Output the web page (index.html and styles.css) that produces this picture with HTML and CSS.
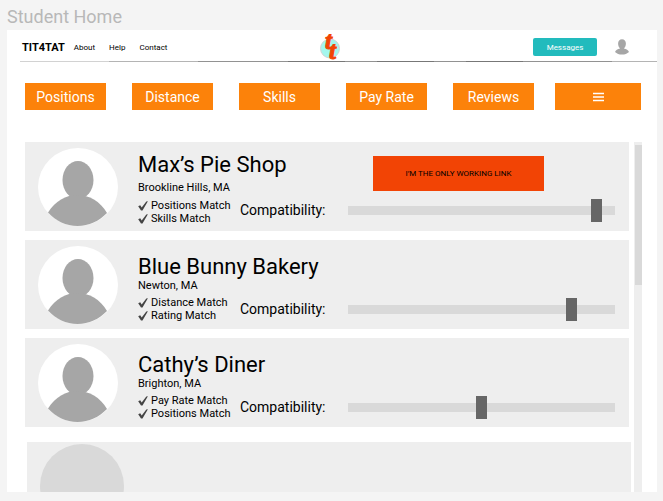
FILE: index.html
```html
<!DOCTYPE html>
<html lang="en">
<head>
<meta charset="utf-8">
<meta name="viewport" content="width=device-width, initial-scale=1">
<title>Student Home</title>
<link rel="stylesheet" href="styles.css">
</head>
<body>
<svg class="symbols" aria-hidden="true">
  <symbol id="person" viewBox="0 0 80 78">
    <ellipse cx="40" cy="39" rx="40" ry="39" fill="#fff"/>
    <ellipse cx="40" cy="32" rx="15.500" ry="19" fill="#a6a6a6"/>
    <path d="M10 64.500C17 53 28 47 39.500 47S62 53 69 65C61 73 51 78 39.500 78S18 73 10 64.500Z" fill="#a6a6a6"/>
  </symbol>
  <symbol id="check" viewBox="0 0 10 10">
    <path d="M0.200 5.300L2.200 4.300L3.700 6.600L8.300 0.500L9.900 0.300L4.500 9.500H3Z" fill="#444"/>
  </symbol>
</svg>
<h1 class="page-title">Student Home</h1>
<div class="frame">
  <header class="header">
    <div class="header-left">
      <a class="brand" href="#">TIT4TAT</a>
      <nav class="nav">
        <a href="#">About</a>
        <a href="#">Help</a>
        <a href="#">Contact</a>
      </nav>
    </div>
    <svg class="logo" viewBox="0 0 20 28" role="img" aria-label="TIT4TAT logo">
      <circle cx="10" cy="15.500" r="9.500" fill="#a3f7ee" stroke="#d4d4d4"/>
      <text class="logo-letter" x="5" y="16">t<tspan x="9" y="26">t</tspan></text>
    </svg>
    <div class="header-right">
      <button class="messages" type="button">Messages</button>
      <a class="account" href="#" aria-label="Account">
        <svg viewBox="0 0 14 16" aria-hidden="true">
          <path d="M7 0.300C9.300 0.300 10.900 2.100 10.900 4.600C10.900 6.800 10.100 8.600 8.900 9.600C11.500 10 13.300 11.200 14 13C12.200 14.700 9.900 15.600 7 15.600S1.800 14.700 0 13C0.700 11.200 2.500 10 5.100 9.600C3.900 8.600 3.100 6.800 3.100 4.600C3.100 2.100 4.700 0.300 7 0.300Z" fill="#a6a6a6"/>
        </svg>
      </a>
    </div>
  </header>
  <div class="rule"></div>
  <div class="filters">
    <div class="filter-group">
      <button class="filter" type="button">Positions</button>
      <button class="filter" type="button">Distance</button>
      <button class="filter" type="button">Skills</button>
      <button class="filter" type="button">Pay Rate</button>
      <button class="filter" type="button">Reviews</button>
    </div>
    <button class="filter menu" type="button" aria-label="Menu">
      <svg viewBox="0 0 12 10" aria-hidden="true">
        <path d="M1 1.500H12M1 5H12M1 8.500H12" stroke="#fff" stroke-width="1.600"/>
      </svg>
    </button>
  </div>
  <main class="results">
    <div class="list">
      <article class="card featured">
        <svg class="avatar" aria-hidden="true"><use href="#person"/></svg>
        <div class="body">
          <div class="heading">
            <h2 class="name">Max’s Pie Shop</h2>
            <p class="place">Brookline Hills, MA</p>
          </div>
          <a class="cta" href="#">I’M THE ONLY WORKING LINK</a>
          <ul class="matches">
            <li><svg class="check" aria-hidden="true"><use href="#check"/></svg>Positions Match</li>
            <li><svg class="check" aria-hidden="true"><use href="#check"/></svg>Skills Match</li>
          </ul>
          <label class="label" for="fit-1">Compatibility:</label>
          <input class="range" id="fit-1" type="range" min="0" max="100" value="95">
        </div>
      </article>
      <article class="card">
        <svg class="avatar" aria-hidden="true"><use href="#person"/></svg>
        <div class="body">
          <div class="heading">
            <h2 class="name">Blue Bunny Bakery</h2>
            <p class="place">Newton, MA</p>
          </div>
          <ul class="matches">
            <li><svg class="check" aria-hidden="true"><use href="#check"/></svg>Distance Match</li>
            <li><svg class="check" aria-hidden="true"><use href="#check"/></svg>Rating Match</li>
          </ul>
          <label class="label" for="fit-2">Compatibility:</label>
          <input class="range" id="fit-2" type="range" min="0" max="100" value="85">
        </div>
      </article>
      <article class="card">
        <svg class="avatar" aria-hidden="true"><use href="#person"/></svg>
        <div class="body">
          <div class="heading">
            <h2 class="name">Cathy’s Diner</h2>
            <p class="place">Brighton, MA</p>
          </div>
          <ul class="matches">
            <li><svg class="check" aria-hidden="true"><use href="#check"/></svg>Pay Rate Match</li>
            <li><svg class="check" aria-hidden="true"><use href="#check"/></svg>Positions Match</li>
          </ul>
          <label class="label" for="fit-3">Compatibility:</label>
          <input class="range" id="fit-3" type="range" min="0" max="100" value="50">
        </div>
      </article>
      <div class="placeholder"><div class="placeholder-avatar"></div></div>
    </div>
    <div class="scrollbar"><div class="scroll-thumb"></div></div>
  </main>
</div>
</body>
</html>
```
FILE: styles.css
```css
* {
  box-sizing: border-box;
}

body {
  margin: 0;
  padding: 4px 6px 9px 7px;
  background: #f4f4f4;
  color: #000;
  font-family: Roboto, "Liberation Sans", sans-serif;
}

h1, h2, p, ul {
  margin: 0;
  padding: 0;
  font-weight: 400;
}

a {
  color: inherit;
  text-decoration: none;
}

button {
  border: 0;
  padding: 0;
  color: #fff;
  font-family: inherit;
}

.symbols {
  display: block;
  width: 0;
  height: 0;
}

.page-title {
  color: #b8b8b8;
  font-size: 18px;
  line-height: 26px;
}

.frame {
  background: #fff;
}

/* Header */
.header {
  display: grid;
  grid-template-columns: 1fr auto 1fr;
  align-items: center;
  height: 31px;
  padding: 3px 19px 0 15px;
}

.header-left,
.header-right,
.nav {
  display: flex;
  align-items: center;
}

.header-left {
  gap: 9px;
}

.brand {
  font-size: 11px;
  font-weight: 700;
}

.nav {
  gap: 14px;
  font-size: 8px;
}

.logo {
  width: 20px;
  height: 28px;
  overflow: visible;
}

.logo-letter {
  fill: #f24405;
  stroke: #f24405;
  font-family: "Liberation Serif", serif;
  font-size: 25px;
  font-style: italic;
  font-weight: 700;
}

.header-right {
  justify-content: flex-end;
  gap: 18px;
  padding-right: 9px;
}

.messages {
  width: 64px;
  height: 18px;
  border-radius: 2px;
  background: #22bbbd;
  font-size: 8px;
}

.account svg {
  display: block;
  width: 14px;
  height: 16px;
}

.rule {
  height: 1px;
  margin-left: 13px;
  background: linear-gradient(90deg, #d2d2d2 14%, #b4b4b4 14% 28%, #929292 28% 42%, #777 42% 51%, #929292 51% 56%, #777 56% 65%, #929292 65% 70%, #777 70% 79%, #929292 79% 93%, #b4b4b4 93%);
}

/* Filters */
.filters {
  display: flex;
  gap: 21px;
  padding: 21px 16px 32px 18px;
}

.filter-group {
  display: flex;
  flex: 1;
  gap: 26px;
}

.filter {
  flex: 1;
  height: 27px;
  background: #fc820a;
  font-size: 14px;
}

.menu {
  display: flex;
  flex: 0 0 86px;
  align-items: center;
  justify-content: center;
}

.menu svg {
  width: 12px;
  height: 10px;
}

/* Results */
.results {
  display: flex;
  gap: 3px;
  padding: 0 15px 0 18px;
}

.list {
  display: flex;
  flex: 1;
  flex-direction: column;
  gap: 9px;
}

.card {
  display: flex;
  gap: 20px;
  height: 89px;
  margin-right: 2px;
  padding: 6px 14px 4px 13px;
  background: #eee;
}

.avatar {
  flex: none;
  width: 80px;
  height: 78px;
}

.body {
  display: grid;
  flex: 1;
  grid-template-columns: 102px 108px 1fr;
  grid-template-rows: 47px 32px;
  align-items: center;
}

.featured .body {
  grid-template-rows: 51px 22px;
}

.heading {
  grid-column: 1 / 3;
  align-self: end;
}

.featured .heading {
  padding-bottom: 4px;
}

.name {
  font-size: 22px;
  line-height: 24px;
}

.place {
  font-size: 11px;
  line-height: 14px;
}

.featured .place {
  padding-top: 4px;
}

.cta {
  display: flex;
  align-items: center;
  justify-content: center;
  width: 171px;
  height: 35px;
  margin-left: 25px;
  background: #f24405;
  font-size: 8px;
}

.matches {
  grid-column: 1;
  list-style: none;
  font-size: 11px;
  line-height: 13px;
}

.featured .matches {
  align-self: start;
}

.matches li {
  display: flex;
  align-items: center;
  gap: 3px;
  white-space: nowrap;
}

.check {
  width: 10px;
  height: 10px;
}

.label {
  font-size: 14px;
}

.range {
  width: 100%;
  height: 23px;
  margin: 0;
  background: transparent;
  appearance: none;
}

.range::-webkit-slider-runnable-track {
  height: 9px;
  background: #d9d9d9;
}

.range::-webkit-slider-thumb {
  width: 11px;
  height: 23px;
  margin-top: -7px;
  background: #666;
  appearance: none;
}

.placeholder {
  height: 50px;
  margin: 6px 0 0 2px;
  padding: 2px 13px 0;
  overflow: hidden;
  background: #eee;
}

.placeholder-avatar {
  width: 84px;
  height: 84px;
  border-radius: 50%;
  background: #d9d9d9;
}

.scrollbar {
  width: 8px;
  padding: 3px 0 0 1px;
  background: #eee;
}

.scroll-thumb {
  width: 7px;
  height: 140px;
  background: #d9d9d9;
}
```
